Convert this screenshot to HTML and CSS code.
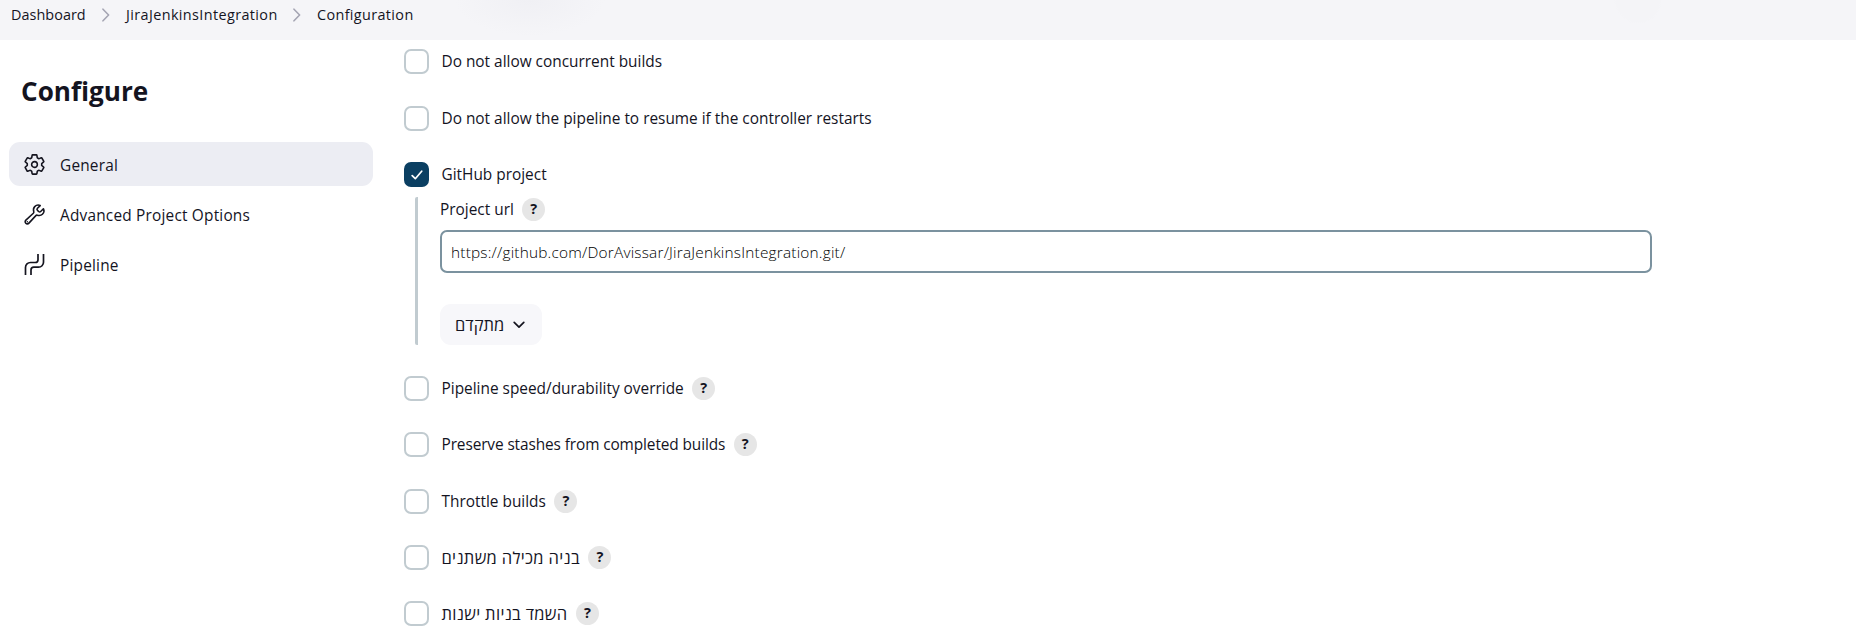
FILE: index.html
```
<!DOCTYPE html>
<html lang="en">
<head>
<meta charset="utf-8">
<title>Configuration</title>
<link rel="stylesheet" href="styles.css">
</head>
<body>
<header class="breadcrumbs">
  <span class="crumb crumb-home">Dashboard</span>
  <svg class="crumb-sep" viewBox="0 0 8 14"><path d="M1 1.2l5.6 5.8L1 12.8"/></svg>
  <span class="crumb crumb-job">JiraJenkinsIntegration</span>
  <svg class="crumb-sep" viewBox="0 0 8 14"><path d="M1 1.2l5.6 5.8L1 12.8"/></svg>
  <span class="crumb crumb-page">Configuration</span>
</header>
<div class="page">
  <aside class="sidebar">
    <h1 class="title">Configure</h1>
    <nav class="tasks">
      <a class="task task-active">
        <svg class="task-icon" viewBox="0 0 512 512"><path d="M262.29 192.31a64 64 0 1057.4 57.4 64.13 64.13 0 00-57.4-57.4zM416.39 256a154.34 154.34 0 01-1.53 20.79l45.21 35.46a10.81 10.81 0 012.45 13.75l-42.77 74a10.81 10.81 0 01-13.14 4.59l-44.9-18.08a16.11 16.11 0 00-15.17 1.75A164.48 164.48 0 01325 400.8a15.94 15.94 0 00-8.82 12.14l-6.73 47.89a11.08 11.08 0 01-10.68 9.17h-85.54a11.11 11.11 0 01-10.69-8.87l-6.72-47.82a16.07 16.07 0 00-9-12.22 155.3 155.3 0 01-21.46-12.57 16 16 0 00-15.11-1.71l-44.89 18.07a10.81 10.81 0 01-13.14-4.58l-42.77-74a10.8 10.8 0 012.45-13.75l38.21-30a16.05 16.05 0 006-14.08c-.36-4.17-.58-8.33-.58-12.5s.21-8.27.58-12.35a16 16 0 00-6.07-13.94l-38.19-30A10.81 10.81 0 0149.48 186l42.77-74a10.81 10.81 0 0113.14-4.59l44.9 18.08a16.11 16.11 0 0015.17-1.75A164.48 164.48 0 01187 111.2a15.94 15.94 0 008.82-12.14l6.73-47.89A11.08 11.08 0 01213.23 42h85.54a11.11 11.11 0 0110.69 8.87l6.72 47.82a16.07 16.07 0 009 12.22 155.3 155.3 0 0121.46 12.57 16 16 0 0015.11 1.71l44.89-18.07a10.81 10.81 0 0113.14 4.58l42.77 74a10.8 10.8 0 01-2.45 13.75l-38.21 30a16.05 16.05 0 00-6.05 14.08c.33 4.14.55 8.3.55 12.47z"/></svg>
        <span class="task-label">General</span>
      </a>
      <a class="task">
        <svg class="task-icon" viewBox="0 0 512 512"><path d="M393.87 190a32.1 32.1 0 01-45.25 0l-26.57-26.57a32.09 32.09 0 010-45.26L382.19 58a1 1 0 00-.3-1.64c-38.82-16.64-89.15-8.16-121.11 23.57-30.58 30.35-32.32 76-21.12 115.84a31.93 31.93 0 01-9.06 32.08L64 380a48.17 48.17 0 1068 68l153.86-167a31.93 31.93 0 0131.6-9.13c39.54 10.59 84.54 8.6 114.72-21.19 32.49-32 39.5-88.56 23.75-120.93a1 1 0 00-1.6-.26z"/><circle cx="96" cy="416" r="16" class="icon-dot"/></svg>
        <span class="task-label">Advanced Project Options</span>
      </a>
      <a class="task">
        <svg class="task-icon" viewBox="0 0 23 23"><path class="pipe" d="M2.500 22v-7.500a5 5 0 0 1 5-5h4.700a2.800 2.800 0 0 0 2.800-2.800V1M8 22v-5a2.800 2.800 0 0 1 2.800-2.800h4.700a5 5 0 0 0 5-5V1"/></svg>
        <span class="task-label">Pipeline</span>
      </a>
    </nav>
  </aside>
  <main class="form">
    <label class="option"><span class="check"></span><span class="label">Do not allow concurrent builds</span></label>
    <label class="option"><span class="check"></span><span class="label">Do not allow the pipeline to resume if the controller restarts</span></label>
    <label class="option option-open"><span class="check check-on"><svg class="tick" viewBox="0 0 12 10"><path d="M1.200 5.700l3.100 3L10.700 1.200"/></svg></span><span class="label">GitHub project</span></label>
    <section class="nested">
      <div class="field-head"><span class="label">Project url</span><span class="help">?</span></div>
      <div class="input"><span class="value">https://github.com/DorAvissar/JiraJenkinsIntegration.git/</span></div>
      <button class="advanced"><span class="label hebrew hebrew-button" dir="rtl">מתקדם</span><svg class="chevron" viewBox="0 0 12 8"><path d="M1.200 1.300L6 6.100l4.800-4.800"/></svg></button>
    </section>
    <label class="option"><span class="check"></span><span class="label">Pipeline speed/durability override</span><span class="help">?</span></label>
    <label class="option"><span class="check"></span><span class="label label-tight">Preserve stashes from completed builds</span><span class="help">?</span></label>
    <label class="option"><span class="check"></span><span class="label">Throttle builds</span><span class="help">?</span></label>
    <label class="option"><span class="check"></span><span class="label hebrew" dir="rtl">בניה מכילה משתנים</span><span class="help">?</span></label>
    <label class="option"><span class="check"></span><span class="label hebrew" dir="rtl">השמד בניות ישנות</span><span class="help">?</span></label>
  </main>
</div>
</body>
</html>
```
FILE: styles.css
```
* { box-sizing: border-box; }
body {
  margin: 0;
  height: 642px;
  overflow: hidden;
  background: #fff;
  color: #14141f;
  font-family: "Open Sans", "Noto Sans", "DejaVu Sans", sans-serif;
  font-size: 15.4px;
  line-height: 22px;
  white-space: nowrap;
}
svg { display: block; fill: none; stroke: currentColor; stroke-linecap: round; stroke-linejoin: round; flex: none; }
.breadcrumbs {
  display: flex;
  align-items: flex-start;
  height: 40px;
  padding: 4px 0 0 11px;
  background:
    radial-gradient(ellipse 75px 36px at 530px 0, #f0f0f4, transparent),
    radial-gradient(circle 24px at 1638px 0, #f4f4f7 90%, transparent),
    #f5f5f8;
  font-size: 14.4px;
}
.crumb-sep { width: 8px; height: 14px; margin-top: 4px; stroke: #a5a5b3; stroke-width: 1.6; }
.crumb-home { width: 91px; letter-spacing: .05px; }
.crumb-job { width: 167px; letter-spacing: .39px; }
.crumb-page { letter-spacing: .37px; }
.crumb-job, .crumb-page { margin-left: 16px; }
.page { display: grid; grid-template-columns: 404px 1fr; }
.sidebar { padding: 33px 31px 0 9px; }
.title { margin: 0 0 33px 12px; font-size: 26.1px; line-height: 36px; font-weight: 700; }
.tasks { display: grid; gap: 6px; }
.task { display: flex; align-items: center; gap: 14px; height: 44px; padding: 2px 0 0 14px; border-radius: 11px; }
.task-active { background: #ecedf3; }
.task-icon { width: 23px; height: 23px; margin-top: -2px; stroke-width: 35; }
.task-label { padding-top: 2px; letter-spacing: .2px; }
.pipe { stroke-width: 1.7; stroke-linecap: butt; }
.icon-dot { fill: currentColor; stroke: none; }
.form { padding-top: 9px; }
.option { display: flex; align-items: center; height: 25px; margin-bottom: 31.5px; }
.option-open { margin-bottom: 10px; }
.nested ~ .option { margin-bottom: 31.25px; }
.check { width: 25px; height: 25px; margin-right: 12.5px; border: 2px solid #c1cbd0; border-radius: 7px; flex: none; }
.check-on { display: grid; place-items: center; background: #0b3f62; border-color: #0b3f62; color: #fff; }
.tick { width: 12px; height: 10px; stroke-width: 1.7; }
.label { padding-top: 1px; }
.label-tight { letter-spacing: -.1px; }
.hebrew { font-size: 16.5px; letter-spacing: .32px; }
.hebrew-button { letter-spacing: 0; }
.help { width: 23px; height: 23px; margin-left: 8.500px; border-radius: 50%; background: #e6e6e6; text-align: center; font-size: 14.5px; font-weight: 700; line-height: 22px; flex: none; }
.nested { width: 1237px; height: 148px; margin: 0 0 31px 11px; padding-left: 22px; border-left: 3px solid #c1cbd0; border-radius: 2px; }
.field-head { display: flex; align-items: center; height: 24px; }
.field-head .label { padding-top: 2px; }
.input { display: flex; align-items: center; width: 1212px; height: 43px; margin: 9px 0 31px; padding: 3px 0 0 9px; border: 2px solid #7b929f; border-radius: 7px; font-weight: 300; color: #000; }
.value { letter-spacing: .2px; }
.advanced { display: flex; align-items: center; gap: 9px; width: 102px; height: 41px; padding: 0 0 0 15px; border: 0; border-radius: 11px; background: #f7f7fa; color: inherit; font: inherit; }
.chevron { width: 12px; height: 8px; stroke-width: 1.7; }
```
